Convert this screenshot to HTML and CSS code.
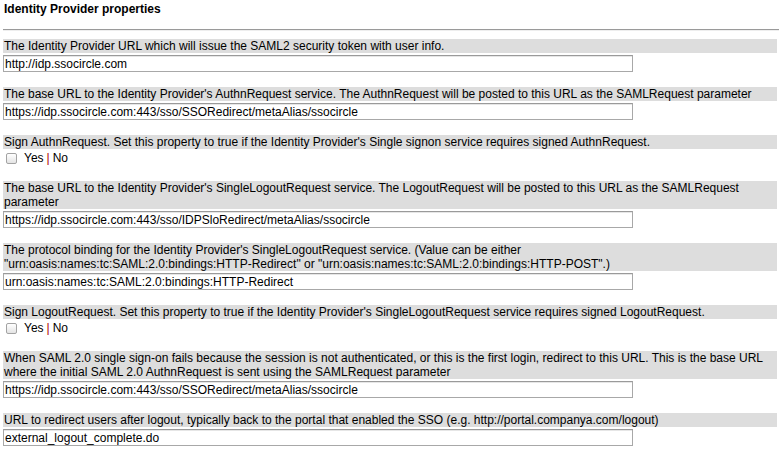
FILE: index.html
```html
<!DOCTYPE html>
<html>
<head>
<meta charset="utf-8">
<link rel="stylesheet" href="styles.css">
</head>
<body>
<div class="page">
  <div class="title">Identity Provider properties</div>
  <hr class="rule">
  <div class="prop">
    <div class="label">The Identity Provider URL which will issue the SAML2 security token with user info.</div>
    <input class="field" type="text" value="http://idp.ssocircle.com">
  </div>
  <div class="prop">
    <div class="label">The base URL to the Identity Provider's AuthnRequest service. The AuthnRequest will be posted to this URL as the SAMLRequest parameter</div>
    <input class="field" type="text" value="https://idp.ssocircle.com:443/sso/SSORedirect/metaAlias/ssocircle">
  </div>
  <div class="prop">
    <div class="label">Sign AuthnRequest. Set this property to true if the Identity Provider's Single signon service requires signed AuthnRequest.</div>
    <div class="check"><input class="box" type="checkbox"><span class="yes">Yes</span><span class="sep">|</span><span class="no">No</span></div>
  </div>
  <div class="prop">
    <div class="label">The base URL to the Identity Provider's SingleLogoutRequest service. The LogoutRequest will be posted to this URL as the SAMLRequest parameter</div>
    <input class="field" type="text" value="https://idp.ssocircle.com:443/sso/IDPSloRedirect/metaAlias/ssocircle">
  </div>
  <div class="prop">
    <div class="label">The protocol binding for the Identity Provider's SingleLogoutRequest service. (Value can be either <span class="nobr">"urn:oasis:names:tc:SAML:2.0:bindings:HTTP-Redirect"</span> or <span class="nobr">"urn:oasis:names:tc:SAML:2.0:bindings:HTTP-POST".)</span></div>
    <input class="field" type="text" value="urn:oasis:names:tc:SAML:2.0:bindings:HTTP-Redirect">
  </div>
  <div class="prop">
    <div class="label">Sign LogoutRequest. Set this property to true if the Identity Provider's SingleLogoutRequest service requires signed LogoutRequest.</div>
    <div class="check"><input class="box" type="checkbox"><span class="yes">Yes</span><span class="sep">|</span><span class="no">No</span></div>
  </div>
  <div class="prop">
    <div class="label">When SAML 2.0 single sign-on fails because the session is not authenticated, or this is the first login, redirect to this URL. This is the base URL where the initial SAML 2.0 AuthnRequest is sent using the SAMLRequest parameter</div>
    <input class="field" type="text" value="https://idp.ssocircle.com:443/sso/SSORedirect/metaAlias/ssocircle">
  </div>
  <div class="prop">
    <div class="label">URL to redirect users after logout, typically back to the portal that enabled the SSO (e.g. http://portal.companya.com/logout)</div>
    <input class="field" type="text" value="external_logout_complete.do">
  </div>
</div>
</body>
</html>
```
FILE: styles.css
```css
html, body {
  margin: 0;
  padding: 0;
  background: #ffffff;
}
.page {
  padding: 2px 2px 0 3px;
  font-family: "Liberation Sans", Arial, sans-serif;
  font-size: 12px;
  line-height: 14px;
  color: #000;
}
.title {
  font-weight: bold;
  padding-left: 1px;
}
.rule {
  margin: 13px 0 8px 0;
  height: 0;
  border: 0;
  border-top: 1px solid #9a9a9a;
  border-bottom: 1px solid #eeeeee;
}
.prop {
  display: flex;
  flex-direction: column;
  align-items: flex-start;
  margin-bottom: 15px;
}
.label {
  align-self: stretch;
  margin-right: 2px;
  background: #dddddd;
  padding-left: 1px;
}
.nobr {
  white-space: nowrap;
}
.field {
  box-sizing: border-box;
  margin: 2px 0 0 0;
  width: 630px;
  height: 17px;
  padding: 0 1px;
  border: 1px solid #a8a8a8;
  border-top-color: #9a9a9a;
  box-shadow: inset 0 1px 0 #e6e6e6;
  font-family: "Liberation Sans", Arial, sans-serif;
  font-size: 12px;
  color: #000;
  background: #fff;
  outline: none;
}
.check {
  display: flex;
  align-items: center;
  height: 16px;
  margin-top: 1px;
}
.box {
  appearance: none;
  -webkit-appearance: none;
  box-sizing: border-box;
  width: 11px;
  height: 11px;
  margin: 0 7px 0 3px;
  border: 1px solid #a3a3a3;
  border-radius: 2px;
  background: linear-gradient(#ffffff, #e4e4e4);
}
.sep {
  color: #b00000;
  margin: 0 3px;
}
```
